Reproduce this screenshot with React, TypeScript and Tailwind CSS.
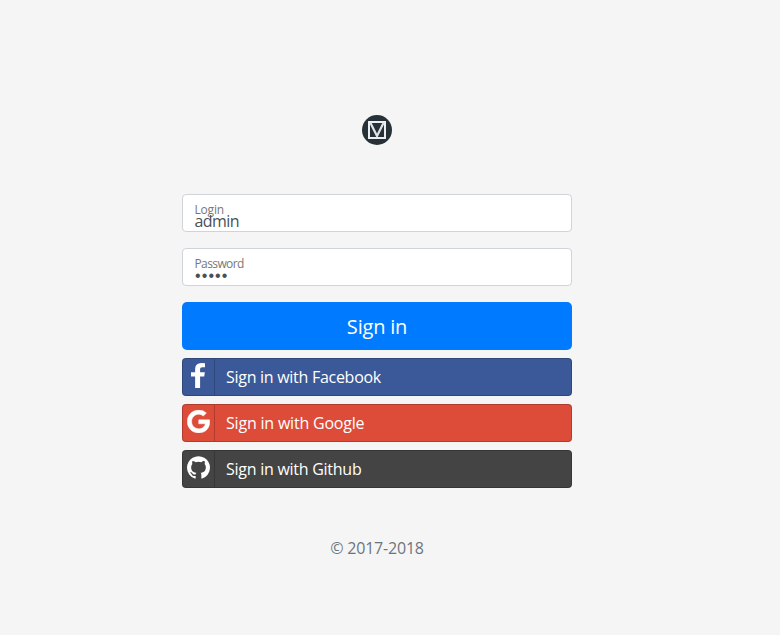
import React from "react";

function FacebookIcon() {
  return (
    <svg width="14" height="25" viewBox="479 0 864 1664" preserveAspectRatio="none" fill="currentColor">
      <path d="M1343 12v264h-157q-86 0-116 36t-30 108v189h293l-39 296h-254v759h-306v-759h-255v-296h255v-218q0-186 104-288.5t277-102.5q147 0 228 12z" />
    </svg>
  );
}

function GoogleIcon() {
  return (
    <svg width="23" height="23" viewBox="128 128 1505 1536" fill="currentColor" stroke="currentColor" strokeWidth="30">
      <path d="M896 786h725q12 67 12 128 0 217-91 387.500t-259.500 266.500-386.500 96q-157 0-299-60.500t-245-163.500-163.500-245-60.500-299 60.500-299 163.500-245 245-163.500 299-60.500q300 0 515 201l-209 201q-123-119-306-119-129 0-238.500 65t-173.500 176.500-64 243.500 64 243.500 173.500 176.500 238.500 65q87 0 160-24t120-60 82-82 51.500-87 22.500-78h-436v-264z" />
    </svg>
  );
}

function GithubIcon() {
  return (
    <svg width="23" height="23" viewBox="128 128 1536 1510" fill="currentColor">
      <path d="M896 128q209 0 385.500 103t279.500 279.500 103 385.500q0 251-146.500 451.500t-378.500 277.500q-27 5-40-7t-13-30q0-3 .5-76.500t.5-134.500q0-97-52-142 57-6 102.500-18t94-39 81-66.500 53-105 20.500-150.500q0-119-79-206 37-91-8-204-28-9-81 11t-92 44l-38 24q-93-26-192-26t-192 26q-16-11-42.500-27t-83.500-38.500-85-13.500q-45 113-8 204-79 87-79 206 0 85 20.500 150t52.500 105 80.500 67 94 39 102.500 18q-39 36-49 103-21 10-45 15t-57 5-65.500-21.500-55.500-62.500q-19-32-48.500-52t-49.500-24l-20-3q-21 0-29 4.500t-5 11.500 9 14 13 12l7 5q22 10 43.500 38t31.500 51l10 23q13 38 44 61.500t67 30 69.500 7 55.500-3.500l23-4q0 38 .5 88.500t.5 54.500q0 18-13 30t-40 7q-232-77-378.500-277.500t-146.500-451.500q0-209 103-385.500t279.500-279.500 385.500-103z" />
    </svg>
  );
}

type SocialProps = { label: string; color: string; tracking: string; icon: React.ReactNode };

function SocialButton({ label, color, tracking, icon }: SocialProps) {
  return (
    <button type="button" className={`flex h-[38px] w-full items-center rounded-[4px] border border-black/20 text-left text-[16px] leading-6 text-white ${color}`}>
      <span className="flex h-full w-8 shrink-0 items-center justify-center border-r border-black/20 pr-px pb-1">{icon}</span>
      <span className={`ml-[11px] ${tracking}`}>{label}</span>
    </button>
  );
}

type FieldProps = { label: string; tracking: string; children: React.ReactNode };

function Field({ label, tracking, children }: FieldProps) {
  return (
    <div className="h-[38px] rounded-[4px] border border-[#ced4da] bg-white px-[11.5px] pt-[5.5px]">
      <div className={`h-[11.5px] text-[12px] leading-[18px] text-[#777] ${tracking}`}>{label}</div>
      <div className="text-[16px] leading-[18px] text-[#495057]">{children}</div>
    </div>
  );
}

export default function App() {
  return (
    <main className="flex h-[635px] w-[780px] flex-col bg-[#f5f5f5] pl-[182px] pt-[115px] font-['Open_Sans',sans-serif]">
      <form className="flex w-[390px] flex-col">
        <svg className="mb-[49px] self-center" width="30" height="30" viewBox="0 0 30 30" fill="none">
          <circle cx="15" cy="15" r="15" fill="#263238" />
          <path d="M7 7H23V23H7Z" stroke="#eceff1" strokeWidth="2" />
          <path d="M8.500 8L15 21L21.500 8" stroke="#dfe3e5" strokeWidth="2.200" />
        </svg>
        <div className="mb-4">
          <Field label="Login" tracking="tracking-[-0.2px]"><span className="tracking-[-0.6px]">admin</span></Field>
        </div>
        <div className="mb-4">
          <Field label="Password" tracking="tracking-[-0.6px]"><span className="ml-[0.5px] font-['Liberation_Sans',sans-serif] tracking-[1.1px]">•••••</span></Field>
        </div>
        <button type="button" className="mb-2 h-12 rounded-[5px] bg-[#007bff] pt-px text-[20px] tracking-[-0.2px] text-white">Sign in</button>
        <div className="flex flex-col gap-2">
          <SocialButton label="Sign in with Facebook" color="bg-[#3b5998]" tracking="tracking-[-0.28px]" icon={<FacebookIcon />} />
          <SocialButton label="Sign in with Google" color="bg-[#dd4b39]" tracking="tracking-[-0.2px]" icon={<GoogleIcon />} />
          <SocialButton label="Sign in with Github" color="bg-[#444444]" tracking="tracking-[-0.26px]" icon={<GithubIcon />} />
        </div>
        <p className="mt-[48px] text-center text-[16px] leading-6 tracking-[-0.2px] text-[#6c757d]">© 2017-2018</p>
      </form>
    </main>
  );
}
